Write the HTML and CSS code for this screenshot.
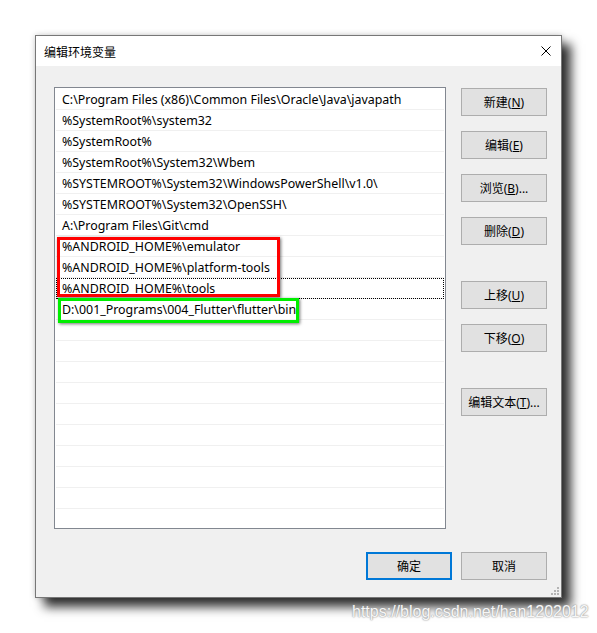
FILE: index.html
```html
<!DOCTYPE html>
<html lang="zh-CN">
<head>
  <meta charset="UTF-8">
  <title>编辑环境变量</title>
  <link rel="stylesheet" href="styles.css">
</head>
<body>

  <div class="dialog">
    <div class="titlebar">
      <span class="title">编辑环境变量</span>
      <svg class="close" width="10" height="10" viewBox="0 0 10 10">
        <path d="M0.5 0.5 L9.5 9.5 M9.5 0.5 L0.5 9.5" stroke="#000" stroke-width="1" fill="none"/>
      </svg>
    </div>

    <div class="content">
      <div class="main">
        <div class="list">
          <div class="row">C:\Program Files (x86)\Common Files\Oracle\Java\javapath</div>
          <div class="row">%SystemRoot%\system32</div>
          <div class="row">%SystemRoot%</div>
          <div class="row">%SystemRoot%\System32\Wbem</div>
          <div class="row">%SYSTEMROOT%\System32\WindowsPowerShell\v1.0\</div>
          <div class="row">%SYSTEMROOT%\System32\OpenSSH\</div>
          <div class="row">A:\Program Files\Git\cmd</div>
          <div class="row">%ANDROID_HOME%\emulator</div>
          <div class="row">%ANDROID_HOME%\platform-tools</div>
          <div class="row focus">%ANDROID_HOME%\tools</div>
          <div class="row">D:\001_Programs\004_Flutter\flutter\bin</div>
          <div class="row"></div>
          <div class="row"></div>
          <div class="row"></div>
          <div class="row"></div>
          <div class="row"></div>
          <div class="row"></div>
          <div class="row"></div>
          <div class="row"></div>
          <div class="row"></div>
          <div class="row"></div>

          <div class="mark mark-red"></div>
          <div class="mark mark-green"></div>
        </div>

        <div class="side">
          <div class="group">
            <button class="btn">新建(<u>N</u>)</button>
            <button class="btn">编辑(<u>E</u>)</button>
            <button class="btn">浏览(<u>B</u>)...</button>
            <button class="btn">删除(<u>D</u>)</button>
          </div>
          <div class="group">
            <button class="btn">上移(<u>U</u>)</button>
            <button class="btn">下移(<u>O</u>)</button>
          </div>
          <div class="group">
            <button class="btn">编辑文本(<u>T</u>)...</button>
          </div>
        </div>
      </div>

      <div class="footer">
        <button class="btn default">确定</button>
        <button class="btn">取消</button>
      </div>
    </div>

    <svg class="grip" width="9" height="9" viewBox="0 0 9 9">
      <g fill="#b4b4b4">
        <rect x="7" y="1" width="2" height="2"/>
        <rect x="4" y="4" width="2" height="2"/>
        <rect x="7" y="4" width="2" height="2"/>
        <rect x="1" y="7" width="2" height="2"/>
        <rect x="4" y="7" width="2" height="2"/>
        <rect x="7" y="7" width="2" height="2"/>
      </g>
    </svg>
  </div>

  <div class="watermark">https://blog.csdn.net/han1202012</div>

</body>
</html>
```

FILE: styles.css
```css
body {
  margin: 0;
  background: #fff;
  font-family: "Noto Sans", "Noto Sans CJK SC", sans-serif;
  font-size: 12px;
  color: #000;
  position: relative;
  width: 597px;
  height: 633px;
  overflow: hidden;
}

.dialog {
  position: relative;
  margin: 35px 0 0 35px;
  width: 525px;
  height: 561px;
  border: 1px solid #777;
  background: #f0f0f0;
  box-shadow: 9px 9px 10px rgba(0, 0, 0, 0.8), 0 0 6px rgba(0, 0, 0, 0.2);
}

.titlebar {
  height: 30px;
  background: #fff;
  display: flex;
  align-items: center;
  justify-content: space-between;
  padding: 0 10px 0 8px;
}

.title {
  font-family: "Noto Sans CJK SC", sans-serif;
  font-size: 12px;
}

.close {
  display: block;
}

.content {
  padding: 21px 14px 17px 18px;
  display: flex;
  flex-direction: column;
  gap: 23px;
}

.main {
  display: flex;
  gap: 15px;
}

.list {
  position: relative;
  width: 390px;
  height: 439px;
  padding-top: 1px;
  border: 1px solid #828790;
  background: #fff;
  overflow: hidden;
}

.row {
  height: 20px;
  line-height: 21px;
  margin: 0 1px;
  padding-left: 6px;
  border-bottom: 1px solid #f0f0f0;
  font-size: 12.4px;
  white-space: nowrap;
}

.row.focus {
  outline: 1px dotted #000;
  outline-offset: -1px;
}

.mark {
  position: absolute;
  box-sizing: border-box;
  border: 3px solid;
  box-shadow: 1px 1px 3px rgba(0, 0, 0, 0.55);
}

.mark-red {
  left: 2px;
  top: 149px;
  width: 223px;
  height: 60px;
  border-color: #ff0000;
}

.mark-green {
  left: 3px;
  top: 210px;
  width: 241px;
  height: 25px;
  border-color: #00ee00;
}

.side {
  display: flex;
  flex-direction: column;
  gap: 36px;
  padding-top: 1px;
}

.group {
  display: flex;
  flex-direction: column;
  gap: 15px;
}

.btn {
  width: 86px;
  height: 28px;
  padding: 0;
  background: #e1e1e1;
  border: 1px solid #adadad;
  font-family: "Noto Sans", "Noto Sans CJK SC", sans-serif;
  font-size: 12px;
  color: #000;
}

.btn.default {
  border: 2px solid #0078d7;
}

.footer {
  display: flex;
  justify-content: flex-end;
  gap: 9px;
}

.grip {
  position: absolute;
  right: 2px;
  bottom: 2px;
}

.watermark {
  position: absolute;
  left: 352px;
  top: 603px;
  font-family: "Liberation Sans", Arial, sans-serif;
  font-size: 16px;
  color: #f6f6f6;
  text-shadow: 0 0 2px #888, 0 0 1px #aaa;
}
```
